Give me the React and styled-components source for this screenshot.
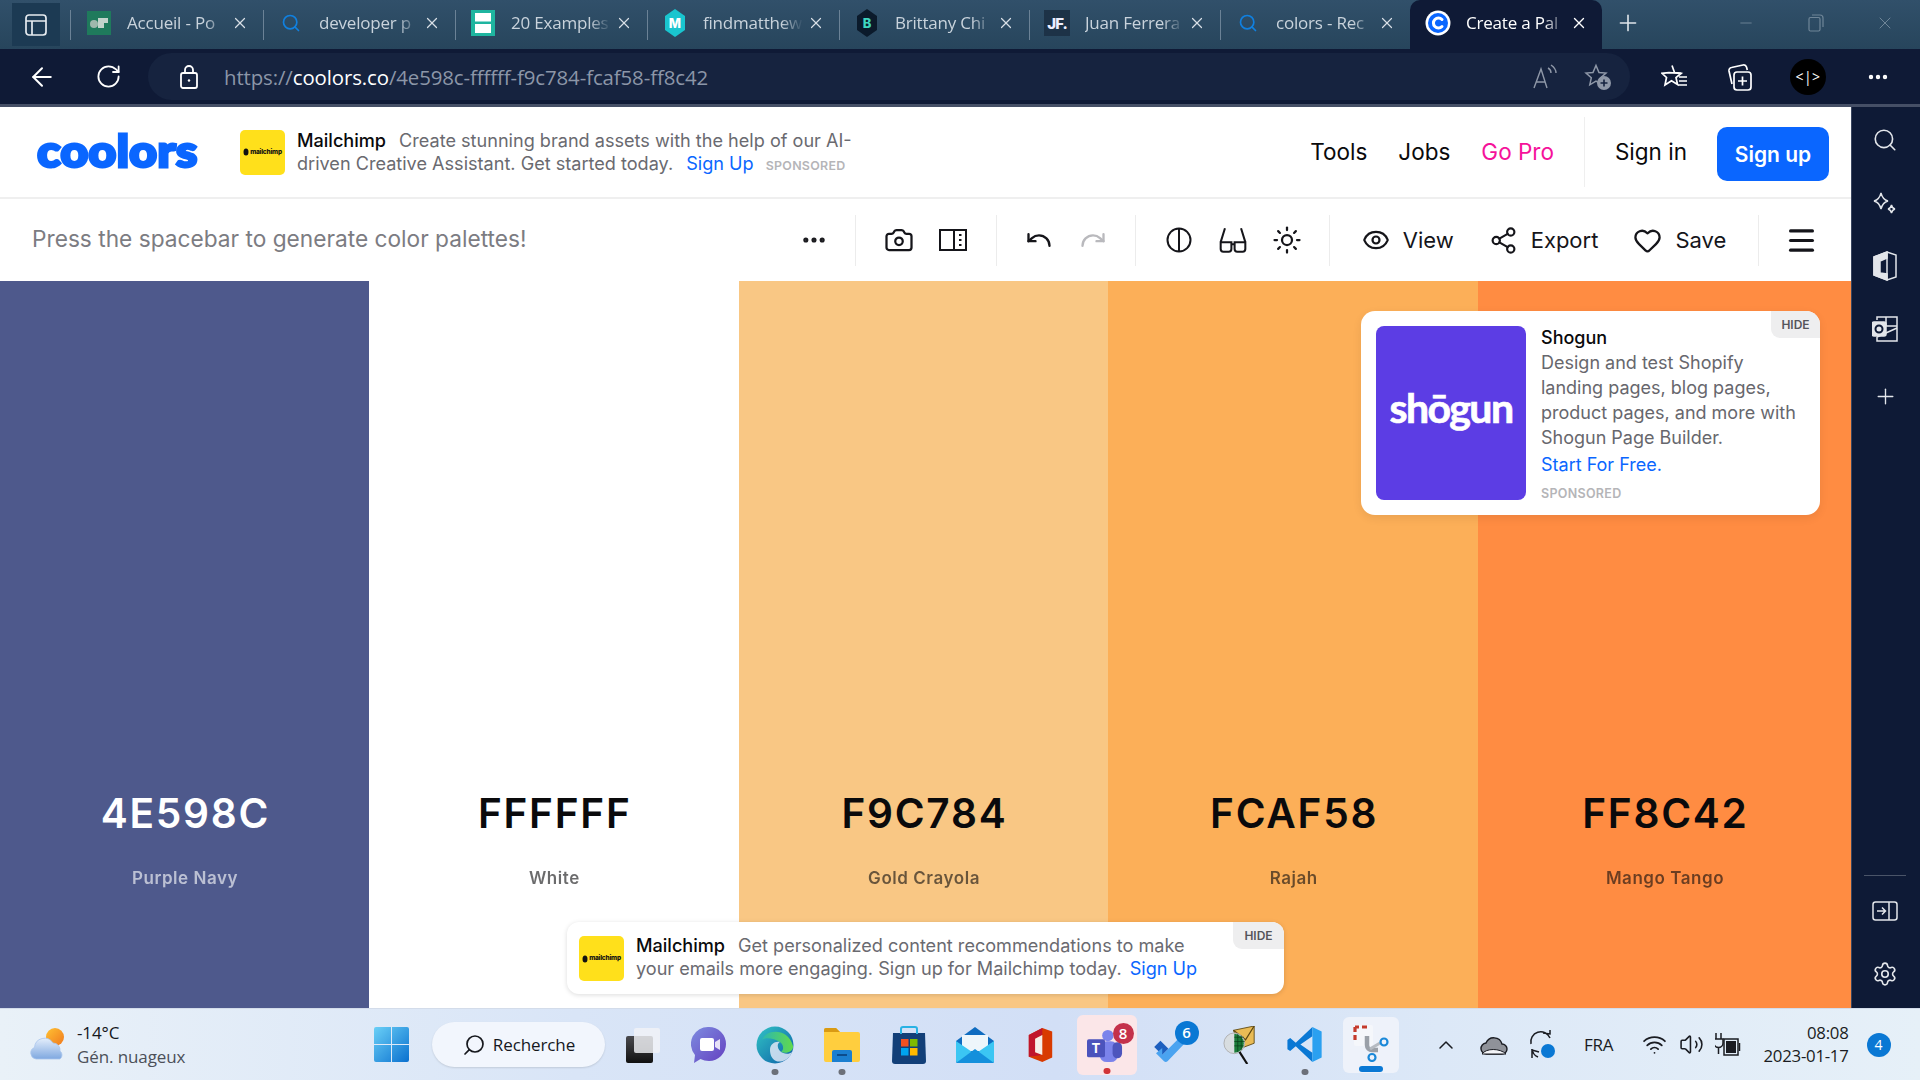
import React from "react";
import styled, { createGlobalStyle } from "styled-components";
import { ArrowLeft, RotateCw, Plus, Minus, X, Search, Ellipsis, Camera, Undo, Redo, Sun, Eye, Share2, Heart, Menu, ChevronUp, Wifi, Volume2, Settings } from "lucide-react";

const Global = createGlobalStyle`
  html, body { margin: 0; padding: 0; width: 1920px; height: 1080px; overflow: hidden; background: #fff; }
  * { box-sizing: border-box; }
  svg { display: block; flex: none; }
`;

const SYS = `"Open Sans", "Noto Sans", sans-serif`;
const UI = `Inter, "Liberation Sans", sans-serif`;

const Screen = styled.div`
  width: 1920px; height: 1080px; display: flex; flex-direction: column; overflow: hidden; font-family: ${UI};
`;
const TabStrip = styled.div`
  height: 49px; display: flex; align-items: stretch; flex: none;
  background: linear-gradient(180deg, #31506a 0%, #27455c 100%);
`;
const WindowToggle = styled.div`
  width: 48px; height: 43px; margin: 3px 10px 3px 12px; background: #1c3a53; display: flex; align-items: center; justify-content: center; color: #e6ebf0;
`;
const Tab = styled.div`
  width: ${p => p.$w || 192}px; height: 49px; display: flex; align-items: center; padding: 0 14px 3px 16px; position: relative; flex: none;
  border-radius: ${p => (p.$active ? "10px 10px 0 0" : "0")};
  background: ${p => (p.$active ? "#0f1a36" : "transparent")};
  &::before {
    content: ""; display: ${p => (p.$active || p.$first ? "none" : "block")}; position: absolute; left: 0; top: 10px; bottom: 9px; width: 1px; background: #6b8296;
  }
`;
const FirstSep = styled.div`
  width: 1px; height: 30px; background: #6b8296; margin: 10px 0 0 0; flex: none;
`;
const TabIcon = styled.div`
  width: 24px; height: 24px; flex: none; margin-right: 16px; display: flex; align-items: center; justify-content: center;
`;
const TabTitle = styled.div`
  flex: 1; min-width: 0; white-space: nowrap; font: 400 17px/24px ${SYS}; letter-spacing: -.2px;
  color: ${p => (p.$active ? "#ffffff" : "#c9d3dc")};
  -webkit-mask-image: linear-gradient(to right, #000 78%, transparent 100%);
  mask-image: linear-gradient(to right, #000 78%, transparent 100%);
`;
const TabClose = styled.div`
  width: 18px; margin-left: 4px; flex: none; color: ${p => (p.$active ? "#fff" : "#d8dfe6")}; display: flex; justify-content: center;
`;
const NewTab = styled.div`
  width: 52px; display: flex; align-items: center; justify-content: center; color: #dfe5ea; padding-bottom: 3px;
`;
const WindowControls = styled.div`
  margin-left: auto; display: flex; align-items: center; padding-bottom: 3px; color: #6f8698;
`;
const WindowButton = styled.div`
  width: 69.5px; display: flex; justify-content: center;
`;
const BrowserBar = styled.div`
  height: 55px; flex: none; background: #0f1a36; display: flex; align-items: center; color: #fff;
`;
const NavButton = styled.div`
  width: ${p => p.$w}px; margin-left: ${p => p.$ml || 0}px; display: flex; justify-content: center; flex: none;
`;
const AddressPill = styled.div`
  width: 1482px; height: 47px; margin: 0 0 0 23px; border-radius: 24px; background: #16233f; display: flex; align-items: center; padding-left: 31px; flex: none;
`;
const Url = styled.div`
  margin-left: 25px; font: 400 20.4px/24px ${SYS}; letter-spacing: -.1px; color: #8c96a8; white-space: nowrap;
  b { font-weight: 400; color: #fff; }
`;
const PillTools = styled.div`
  margin-left: auto; display: flex; align-items: center; gap: 26px; padding-right: 18px; color: #8f98a8;
`;
const Avatar = styled.div`
  width: 36px; height: 36px; border-radius: 50%; background: #000; display: flex; align-items: center; justify-content: center; color: #fff; font: 400 14px/1 ${SYS}; letter-spacing: .5px;
`;
const TopLine = styled.div`
  height: 3px; flex: none; background: #454f66;
`;
const Middle = styled.div`
  flex: 1; display: flex; min-height: 0;
`;
const Main = styled.div`
  flex: 1; min-width: 0; display: flex; flex-direction: column; background: #fff;
`;
const Sidebar = styled.div`
  width: 69px; flex: none; background: #0e1a36; border-left: 1px solid #3a4660; display: flex; flex-direction: column; align-items: center; padding: 20px 2px 0 0; color: #e3e6eb;
`;
const SideSlot = styled.div`
  height: ${p => p.$h}px; margin-top: ${p => p.$mt || 0}px; display: flex; align-items: center; justify-content: center;
`;
const SideBottom = styled.div`
  margin-top: auto; display: flex; flex-direction: column; align-items: center; width: 100%;
`;
const SideRule = styled.div`
  width: 42px; height: 1px; background: #4a5468;
`;
const SiteHeader = styled.div`
  height: 92px; flex: none; display: flex; align-items: center; padding: 0 22px 0 35px; border-bottom: 2px solid #efefef;
`;
const LogoMark = styled.div`
  width: 170px; flex: none; white-space: nowrap; color: #0a66ff; font: 900 44px/56px Lato, sans-serif; letter-spacing: .4px; -webkit-text-stroke: 3px #0a66ff; transform: scaleX(1.09); transform-origin: left center; padding: 0 0 4px 2px;
`;
const HeaderAd = styled.div`
  display: flex; align-items: center; margin-left: 35px; width: 620px;
`;
const BrandTile = styled.div`
  width: 45px; height: 45px; flex: none; border-radius: 5px; background: #ffe01b; display: flex; align-items: center; justify-content: center; gap: 1px; color: #111;
  span { font: 800 6.5px/1 ${UI}; letter-spacing: -.2px; }
`;
const AdText = styled.div`
  margin: ${p => p.$mt || 0}px 0 0 12px; font: 400 18.1px/23px ${UI}; color: #6a6a70; white-space: nowrap;
  strong { font-weight: 500; color: #0a0a0c; margin-right: 13px; }
`;
const AdLink = styled.span`
  color: #0a66ff; margin-left: ${p => p.$ml}px;
`;
const AdTag = styled.span`
  margin-left: 12px; font: 600 12.4px/1 ${UI}; letter-spacing: .3px; color: #b5b5b8;
`;
const HeaderNav = styled.nav`
  margin-left: auto; display: flex; align-items: center; height: 70px; font: 400 22.5px/1 ${UI}; color: #0a0a0c;
`;
const NavLink = styled.span`
  margin-left: ${p => p.$ml || 0}px; color: ${p => p.$color || "inherit"}; white-space: nowrap;
`;
const NavRule = styled.div`
  width: 1px; height: 70px; background: #efefef; margin: 0 30px;
`;
const SignUp = styled.div`
  width: 112px; height: 54px; margin: 4px 0 0 30px; border-radius: 10px; background: #0a66ff; color: #fff; display: flex; align-items: center; justify-content: center; font: 600 21px/1 ${UI};
`;
const ToolBar = styled.div`
  height: 82px; flex: none; display: flex; align-items: center;
`;
const Hint = styled.div`
  flex: 1; padding: 0 0 2px 32px; font: 400 22.7px/1 ${UI}; color: #7c7c82; white-space: nowrap;
`;
const Dots = styled.div`
  width: 54px; margin-right: 14px; display: flex; justify-content: center; color: #1b1b1f;
`;
const ToolGroup = styled.div`
  width: ${p => p.$w}px; height: 51px; flex: none; border-left: 1px solid #ececec; display: flex; align-items: center; justify-content: center; gap: ${p => p.$gap || 0}px; padding-right: ${p => p.$pr || 0}px;
`;
const ToolIcon = styled.div`
  width: 54px; display: flex; justify-content: center; color: ${p => p.$muted ? "#b9b9bd" : "#15151a"};
`;
const ToolButton = styled.div`
  display: flex; align-items: center; gap: 13px; font: 400 22px/1 ${UI}; color: #15151a;
`;
const Palette = styled.div`
  flex: 1; display: flex; position: relative; min-height: 0;
`;
const Swatch = styled.div`
  flex: none; width: 369.7px; background: ${p => p.$bg}; color: ${p => p.$fg}; display: flex; flex-direction: column; align-items: center; justify-content: flex-end; padding-bottom: 119px;
  &:nth-child(1) { width: 369px; }
  &:nth-child(5) { flex: 1; }
`;
const Hex = styled.div`
  font: 600 40.6px/48px ${UI}; letter-spacing: 1.75px; padding-left: 1.75px;
`;
const ColorName = styled.div`
  margin-top: 29px; padding-left: 1px; font: 600 17px/22px ${UI}; letter-spacing: .55px; opacity: ${p => p.$o};
`;
const AdCard = styled.div`
  position: absolute; right: 31px; top: 30px; width: 459px; height: 204px; background: #fff; border-radius: 14px; padding: 15px; display: flex; overflow: hidden; box-shadow: 0 3px 10px rgba(0,0,0,.08);
`;
const ShogunTile = styled.div`
  width: 150px; height: 174px; flex: none; border-radius: 8px; background: #5c3de4; display: flex; align-items: center; justify-content: center; padding-bottom: 12px; color: #fff; font: 700 41px/1 Lato, sans-serif; letter-spacing: -1.6px; -webkit-text-stroke: .7px #fff;
`;
const AdBody = styled.div`
  margin-left: 15px; display: flex; flex-direction: column; font: 400 18px/25.3px ${UI}; color: #67676d;
`;
const AdTitle = styled.div`
  font-weight: 500; color: #0a0a0c; line-height: 23.5px;
`;
const AdBlueLine = styled.div`
  color: #0a66ff; margin-top: 1px;
`;
const AdTagBlock = styled.div`
  margin-top: 9.5px; font: 600 12.5px/16px ${UI}; letter-spacing: .3px; color: #b5b5b8;
`;
const Hide = styled.div`
  position: absolute; top: 0; right: 0; width: ${p => p.$w}px; height: 27px; background: #eeeeef; border-bottom-left-radius: 9px; color: #55555b; display: flex; align-items: center; justify-content: center; font: 600 12px/1 ${UI};
`;
const BottomAd = styled.div`
  position: absolute; left: 567px; top: 641px; width: 717px; height: 72px; background: #fff; border-radius: 12px; padding: 14px 12px; display: flex; overflow: hidden; box-shadow: 0 1px 5px rgba(0,0,0,.14);
`;
const Taskbar = styled.div`
  height: 72px; flex: none; display: flex; align-items: center; position: relative; font-family: ${SYS}; color: #16181d;
  background: linear-gradient(90deg, #e9f1f8 0%, #d9e5f7 30%, #d2dff6 55%, #dce8f7 75%, #e6f0f8 100%);
  border-top: 1px solid #d3dcea;
`;
const Weather = styled.div`
  width: 374px; flex: none; padding-left: 29px; display: flex; align-items: center; gap: 10px;
`;
const WeatherText = styled.div`
  font: 400 17px/24px ${SYS}; letter-spacing: -.1px;
  div + div { color: #4c5058; }
`;
const SearchPill = styled.div`
  width: 173px; height: 45px; margin: 0 0 0 23px; border-radius: 23px; background: #f2f6fd; box-shadow: 0 1px 2px rgba(0,0,0,.12); display: flex; align-items: center; justify-content: center; gap: 7px; font: 400 17px/1 ${SYS}; letter-spacing: -.1px; color: #16181d; flex: none;
`;
const MirroredSearch = styled(Search)`
  transform: scaleX(-1);
`;
const Apps = styled.div`
  display: flex; margin-left: 4px; flex: none; align-items: center;
`;
const AppSlot = styled.div`
  width: ${p => p.$w || 66.6}px; height: ${p => p.$h || 60}px; margin-left: ${p => p.$ml || 0}px; padding: ${p => p.$pad || 0}; position: relative; display: flex; align-items: center; justify-content: center; border-radius: 6px; background: ${p => p.$bg || "transparent"};
`;
const RunDot = styled.div`
  position: absolute; bottom: ${p => p.$b ?? 0}px; left: 50%; transform: translateX(-50%); width: ${p => p.$w || 7}px; height: 6px; border-radius: 3px; background: ${p => p.$c || "#6c7079"};
`;
const Badge = styled.div`
  position: absolute; top: ${p => p.$t}px; right: ${p => p.$r}px; width: ${p => p.$s}px; height: ${p => p.$s}px; border-radius: 50%; background: ${p => p.$c}; color: #fff; display: flex; align-items: center; justify-content: center; font: 600 15px/1 ${SYS};
`;
const Tray = styled.div`
  display: flex; align-items: center; flex: none; margin-left: 23px; color: #1a1c22;
`;
const TraySlot = styled.div`
  width: ${p => p.$w}px; display: flex; justify-content: center; font: 400 17px/1 ${SYS}; letter-spacing: -.3px;
`;
const Clock = styled.div`
  width: 100px; padding: 0 1px 2px 0; text-align: right; font: 400 16.8px/23px ${SYS}; letter-spacing: -.25px;
`;
const NotifyDot = styled.div`
  width: 24px; height: 24px; border-radius: 50%; margin-left: 17px; background: #0a78d4; color: #fff; display: flex; align-items: center; justify-content: center; font: 400 14px/1 ${SYS};
`;

const Glasses = () => (
  <svg width="30" height="30" viewBox="0 0 28 28" fill="none" stroke="currentColor" strokeWidth="1.900">
    <path d="M2.500 16 L6.500 3 M25.500 16 L21.500 3 M2.500 16h10v6.500a2.500 2.500 0 0 1-2.500 2.500H5a2.500 2.500 0 0 1-2.500-2.500zM15.500 16h10v6.500a2.500 2.500 0 0 1-2.500 2.500h-5a2.500 2.500 0 0 1-2.500-2.500zM12.500 18h3" />
  </svg>
);
const ContrastIcon = () => (
  <svg width="26" height="28" viewBox="0 0 26 28" fill="none" stroke="currentColor" strokeWidth="2">
    <circle cx="13" cy="14" r="11.500" /><path d="M13 2.500v23" />
  </svg>
);
const SidePanelIcon = () => (
  <svg width="28" height="26" viewBox="0 0 28 26" fill="none" stroke="currentColor" strokeWidth="2">
    <rect x="1" y="3" width="26" height="20" /><path d="M15 3v20M20 8h2.500M20 13h2.500M20 18h2.500" />
  </svg>
);
const ReadAloud = () => (
  <svg width="26" height="26" viewBox="0 0 26 26" fill="none" stroke="currentColor" strokeWidth="1.400">
    <path d="M2 24 L9 5 L15 24 M4.500 18h8.500M16 4c2 1 3 3 3 5M19 1c3 2 5 5 5 8" />
  </svg>
);
const FavAdd = () => (
  <svg width="28" height="28" viewBox="0 0 28 28" fill="none" stroke="currentColor" strokeWidth="1.500">
    <path d="M12 2.500l3 7 7 .6-5.300 4.700 1.500 7-6.200-3.600-6.200 3.600 1.500-7L2 10.100l7-.6z" />
    <circle cx="20" cy="20" r="7" fill="#8f98a8" stroke="none" /><path d="M20 16.500v7M16.500 20h7" stroke="#16233f" strokeWidth="1.600" />
  </svg>
);
const FavList = () => (
  <svg width="28" height="28" viewBox="0 0 28 28" fill="none" stroke="currentColor" strokeWidth="1.700">
    <path d="M11 2.500l2.500 7 7 .5M20 10.500l-5 4 1.500 7-6-3.800L4 22l1.500-7.500L1 10.300l7-.6z" /><path d="M18 14h8M18 18h8M17 22h9" />
  </svg>
);
const Collections = () => (
  <svg width="28" height="30" viewBox="0 0 28 30" fill="none" stroke="currentColor" strokeWidth="1.700">
    <path d="M7 22l-3-13a3 3 0 0 1 2.500-3.500L18 3a3 3 0 0 1 3.500 2l.8 3" /><rect x="9" y="10" width="17" height="18" rx="3" /><path d="M17.500 14.500v9M13 19h9" />
  </svg>
);
const LockIcon = () => (
  <svg width="20" height="26" viewBox="0 0 20 26" fill="none" stroke="#fff" strokeWidth="1.800">
    <rect x="2" y="9" width="16" height="15" rx="2" /><path d="M6 9V6a4 4 0 0 1 8 0v3" /><circle cx="10" cy="16.500" r="1.200" fill="#fff" stroke="none" />
  </svg>
);
const WindowToggleIcon = () => (
  <svg width="22" height="24" viewBox="0 0 22 24" fill="none" stroke="currentColor" strokeWidth="1.700">
    <rect x="1" y="2" width="20" height="20" rx="3" /><path d="M1 8h20M7 8v14" />
  </svg>
);
const RestoreIcon = () => (
  <svg width="16" height="18" viewBox="0 0 16 18" fill="none" stroke="currentColor" strokeWidth="1.200">
    <rect x="1" y="3.500" width="11" height="13.500" rx="1.500" /><path d="M4 1h8a3 3 0 0 1 3 3v9" />
  </svg>
);
const AccueilFav = () => (
  <svg width="24" height="24" viewBox="0 0 24 24">
    <rect width="24" height="24" fill="#1f7a5c" /><circle cx="7" cy="13" r="4" fill="#9fb8ad" /><path d="M11 7h10v5h-4v5h-6z" fill="#c2d3cb" />
  </svg>
);
const TealFav = () => (
  <svg width="24" height="26" viewBox="0 0 24 26">
    <rect width="24" height="26" fill="#1fb5a0" /><rect x="4" y="3" width="16" height="8.500" fill="#fff" /><rect x="4" y="14" width="16" height="9" fill="#fff" />
  </svg>
);
const HexFav = ({ c, fg, l }) => (
  <svg width="24" height="28" viewBox="0 0 24 28">
    <path d="M12 0l10 7v14l-10 7-10-7V7z" fill={c} />
    <text x="12" y="19" textAnchor="middle" fill={fg} fontFamily="Inter" fontSize="13" fontWeight="800">{l}</text>
  </svg>
);
const JfFav = () => (
  <svg width="26" height="26" viewBox="0 0 26 26">
    <rect width="26" height="26" fill="#1d3247" />
    <text x="13" y="19" textAnchor="middle" fill="#eef" fontFamily="Inter" fontSize="15" fontWeight="800" letterSpacing="-1">JF.</text>
  </svg>
);
const CoolorsFav = () => (
  <svg width="26" height="26" viewBox="0 0 26 26" fill="none">
    <circle cx="13" cy="13" r="12.500" fill="#fff" /><circle cx="13" cy="13" r="10" fill="#0a66ff" />
    <path d="M17 9.500a5 5 0 1 0 0 7" stroke="#fff" strokeWidth="3" strokeLinecap="round" />
  </svg>
);
const WeatherIcon = () => (
  <svg width="38" height="36" viewBox="0 0 38 36">
    <defs>
      <linearGradient id="wc" x1="0" y1="0" x2="0" y2="1"><stop offset="0" stopColor="#e4eefb" /><stop offset="1" stopColor="#7fa8e0" /></linearGradient>
      <linearGradient id="ws" x1="0" y1="0" x2="1" y2="1"><stop offset="0" stopColor="#ffc233" /><stop offset="1" stopColor="#f0781e" /></linearGradient>
    </defs>
    <circle cx="26" cy="10" r="9" fill="url(#ws)" />
    <path d="M7 32a6 6 0 0 1-1.500-11.500A10 10 0 0 1 24 16a7 7 0 0 1 7 8 5 5 0 0 1 0 8z" fill="url(#wc)" stroke="#a9c5ec" strokeWidth=".8" />
  </svg>
);
const WinLogo = () => (
  <svg width="35" height="35" viewBox="0 0 35 35">
    <defs><linearGradient id="wl" x1="0" y1="0" x2="1" y2="1"><stop offset="0" stopColor="#6ad0f7" /><stop offset="1" stopColor="#0a70cf" /></linearGradient></defs>
    <path d="M0 2a2 2 0 0 1 2-2h15v17H0zM18 0h15a2 2 0 0 1 2 2v15H18zM0 18h17v17H2a2 2 0 0 1-2-2zM18 18h17v15a2 2 0 0 1-2 2H18z" fill="url(#wl)" />
  </svg>
);
const TaskView = () => (
  <svg width="36" height="36" viewBox="0 0 36 36">
    <defs><linearGradient id="tv" x1="0" y1="0" x2="0" y2="1"><stop offset="0" stopColor="#4a4a4e" /><stop offset="1" stopColor="#111" /></linearGradient></defs>
    <rect x="2" y="9" width="27" height="27" rx="2" fill="url(#tv)" /><rect x="10" y="1" width="26" height="25" rx="2" fill="#f2f3f6" fillOpacity=".82" />
  </svg>
);
const ChatIcon = () => (
  <svg width="36" height="38" viewBox="0 0 36 38">
    <defs><linearGradient id="ch" x1="0" y1="0" x2="1" y2="1"><stop offset="0" stopColor="#7d8ce0" /><stop offset="1" stopColor="#6440c0" /></linearGradient></defs>
    <path d="M18 1a17 17 0 0 1 0 34c-3 0-6-.8-8.500-2L3 37l1-8A17 17 0 0 1 18 1z" fill="url(#ch)" /><rect x="9" y="12" width="14" height="13" rx="2" fill="#fff" /><path d="M24 16l5-3v11l-5-3z" fill="#e7e2f7" />
  </svg>
);
const EdgeIcon = () => (
  <svg width="38" height="38" viewBox="0 0 38 38">
    <defs>
      <linearGradient id="e1" x1="0" y1="0" x2="1" y2="1"><stop offset="0" stopColor="#31c4c4" /><stop offset="1" stopColor="#0c5ea8" /></linearGradient>
      <linearGradient id="e2" x1="0" y1="0" x2="1" y2="0"><stop offset="0" stopColor="#2cb7b0" /><stop offset="1" stopColor="#62d94c" /></linearGradient>
    </defs>
    <circle cx="19" cy="19" r="18.500" fill="url(#e1)" />
    <path d="M6 14C9 3 32 1 37 20c.6 6-7 8-12 6 3-2 3-7-1-10-6-4-15-5-18-2z" fill="url(#e2)" />
    <path d="M14 24c0-6 5-9 10-8-3 1-3 6 0 9s9 4 12 1c-3 8-11 11-16 9-4-2-6-6-6-11z" fill="#dfe8f6" opacity=".85" />
  </svg>
);
const FolderIcon = () => (
  <svg width="36" height="36" viewBox="0 0 36 36">
    <path d="M0 3a2 2 0 0 1 2-2h10l4 4h18a2 2 0 0 1 2 2v26a2 2 0 0 1-2 2H2a2 2 0 0 1-2-2z" fill="#ffce3e" /><path d="M0 3a2 2 0 0 1 2-2h10l4 4H0z" fill="#d99a13" />
    <path d="M8 25a2 2 0 0 1 2-2h16a2 2 0 0 1 2 2v10H8z" fill="#1b7fd0" /><rect x="13" y="27" width="10" height="2" fill="#0c4c8c" />
  </svg>
);
const StoreIcon = () => (
  <svg width="36" height="38" viewBox="0 0 36 38">
    <path d="M2 7h32l1 28a3 3 0 0 1-3 3H4a3 3 0 0 1-3-3z" fill="#123f78" /><path d="M10 8V3a2 2 0 0 1 2-2h12a2 2 0 0 1 2 2v5" fill="none" stroke="#29b2e4" strokeWidth="2" />
    <rect x="10" y="13" width="7.500" height="7.500" fill="#f25022" /><rect x="19" y="13" width="7.500" height="7.500" fill="#7fba00" /><rect x="10" y="22" width="7.500" height="7.500" fill="#00a4ef" /><rect x="19" y="22" width="7.500" height="7.500" fill="#ffb900" />
  </svg>
);
const MailIcon = () => (
  <svg width="38" height="36" viewBox="0 0 38 36">
    <path d="M0 14L19 0l19 14v20a2 2 0 0 1-2 2H2a2 2 0 0 1-2-2z" fill="#0f6cc0" /><path d="M6 8h26v16H6z" fill="#eef6fb" /><path d="M0 14l19 13 19-13v20a2 2 0 0 1-2 2H2a2 2 0 0 1-2-2z" fill="#3bc6f3" /><path d="M0 36L19 22l19 14z" fill="#1490dc" />
  </svg>
);
const OfficeIcon = () => (
  <svg width="27" height="36" viewBox="0 0 30 38">
    <path d="M2 8L17 0l11 4v29L17 38 2 32z" fill="#d83b01" /><path d="M2 8L17 0v8l-8 4v15l8 3-15 2z" fill="#c0162c" /><path d="M9 12l8-4v22l-8-3z" fill="#f5efe9" />
  </svg>
);
const TeamsIcon = () => (
  <svg width="36" height="36" viewBox="0 0 38 38">
    <circle cx="22" cy="8" r="6" fill="#7b83eb" /><rect x="13" y="14" width="20" height="22" rx="8" fill="#7b83eb" /><rect x="27" y="15" width="10" height="17" rx="5" fill="#4d55bd" />
    <rect x="0" y="12" width="19" height="19" rx="2" fill="#4b53bc" /><text x="9.500" y="26.500" textAnchor="middle" fill="#fff" fontFamily="Inter" fontSize="14" fontWeight="700">T</text>
  </svg>
);
const TodoIcon = () => (
  <svg width="36" height="32" viewBox="0 0 40 36">
    <path d="M0 18l7-7 9 9-7 7z" fill="#1d5fbf" /><path d="M9 27L34 2l6 6-25 26a3 3 0 0 1-4 0l-9-9 7-6z" fill="#4aa3f0" />
  </svg>
);
const MagnifierIcon = () => (
  <svg width="33" height="38" viewBox="0 0 38 44">
    <path d="M12 5l24-5v20L20 26z" fill="#e9bb55" stroke="#5a4510" strokeWidth="1" /><path d="M12 5l14 11 10-16" fill="none" stroke="#5a4510" strokeWidth="1.400" />
    <circle cx="13" cy="20" r="12" fill="#d8dde0" stroke="#aaa" /><path d="M13 9a11 11 0 0 1 0 22z" fill="#1c7d3a" /><path d="M13 13h11M13 18h12M13 23h11M17 9v21M21 11v17" stroke="#0a3b18" strokeWidth=".8" /><path d="M19 30l9 14" stroke="#111" strokeWidth="2.500" />
  </svg>
);
const VsCode = () => (
  <svg width="36" height="37" viewBox="0 0 38 40">
    <path d="M27 1L9 18 3 13l-3 2v10l3 2 6-5 18 17V29L14 20l13-9z" fill="#0a78d4" /><path d="M27 1l10 5v28l-10 5z" fill="#2aa0f0" />
  </svg>
);
const SnipIcon = () => (
  <svg width="36" height="38" viewBox="0 0 36 38" fill="none">
    <rect x="1" y="1" width="19" height="21" rx="2" fill="#f5f7fb" /><path d="M2 3h4M9 3h5M2 3v5M2 11v5" stroke="#c43a2c" strokeWidth="3.200" />
    <path d="M14 12v9a5 5 0 0 0 5 5h6" stroke="#9aa0a8" strokeWidth="4.500" /><path d="M17 25l10-6" stroke="#b6bbc2" strokeWidth="3" />
    <circle cx="31" cy="18" r="3.500" stroke="#1a88d8" strokeWidth="2.200" /><circle cx="19" cy="33.500" r="3.500" stroke="#1a88d8" strokeWidth="2.200" />
  </svg>
);
const CloudTray = () => (
  <svg width="28" height="24" viewBox="0 0 28 24">
    <path d="M7 21a5.500 5.500 0 0 1-1-11 8.500 8.500 0 0 1 16 1 5 5 0 0 1 0 10z" fill="#8f9299" stroke="#1a1c22" strokeWidth="1.400" /><path d="M2 21c4-6 18-6 24 0z" fill="#f3f4f7" stroke="#1a1c22" strokeWidth="1" />
  </svg>
);
const SyncTray = () => (
  <svg width="28" height="30" viewBox="0 0 28 30" fill="none" stroke="#1a1c22" strokeWidth="1.500">
    <path d="M22 8A10 10 0 0 0 3 14M15 3l7 1v-4M4 19a10 10 0 0 0 6 8M4 28v-8l7 2" /><circle cx="20" cy="21" r="7" fill="#0a78d4" stroke="none" />
  </svg>
);
const BatteryTray = () => (
  <svg width="26" height="28" viewBox="0 0 26 28" fill="none" stroke="#1a1c22" strokeWidth="1.500">
    <path d="M1 2v6M6 2v6M-1 8h9v4a4 4 0 0 1-9 0zM3.500 16v7" /><rect x="9" y="8" width="14" height="16" /><rect x="11" y="10" width="10" height="12" fill="#1a1c22" stroke="none" /><path d="M24.500 12v8" />
  </svg>
);
const OfficeSide = () => (
  <svg width="26" height="30" viewBox="0 0 26 30" fill="none" stroke="#e3e6eb" strokeWidth="1.500">
    <path d="M2 6l13-5 9 3v22l-9 3L2 24z" /><path d="M2 6l13-5v6L8 10v12l7 1v6L2 24z" fill="#e3e6eb" /><path d="M15 1v28" />
  </svg>
);
const OutlookSide = () => (
  <svg width="26" height="26" viewBox="0 0 26 26" fill="none" stroke="#e3e6eb" strokeWidth="1.500">
    <path d="M5 4V1h20v24H5v-4M14 1v9M25 10H14M5 21l20-9" /><rect x="0" y="6" width="14" height="14" rx="2" fill="#e3e6eb" /><circle cx="7" cy="13" r="3.500" stroke="#0e1a36" strokeWidth="2" />
  </svg>
);
const SparkSide = () => (
  <svg width="24" height="24" viewBox="0 0 24 24" fill="none" stroke="currentColor" strokeWidth="1.400">
    <path d="M8 1c1 4 3 7 7 8-4 1-6 4-7 8-1-4-3-7-7-8 4-1 6-4 7-8zM18.500 13c.4 2 1.500 3.500 3.500 4-2 .5-3 2-3.500 4-.5-2-1.500-3.500-3.500-4 2-.5 3-2 3.500-4z" />
  </svg>
);
const ExpandSide = () => (
  <svg width="26" height="20" viewBox="0 0 26 20" fill="none" stroke="currentColor" strokeWidth="1.500">
    <rect x="1" y="1" width="24" height="18" rx="2.500" /><path d="M17 1v18M5 10h8M10 6.500l3.500 3.500-3.500 3.500" />
  </svg>
);

const swatches = [
  { bg: "#4e598c", fg: "#fff", hex: "4E598C", name: "Purple Navy", o: .62 },
  { bg: "#ffffff", fg: "#0a0a0c", hex: "FFFFFF", name: "White", o: .6 },
  { bg: "#f9c784", fg: "#0a0a0c", hex: "F9C784", name: "Gold Crayola", o: .6 },
  { bg: "#fcaf58", fg: "#0a0a0c", hex: "FCAF58", name: "Rajah", o: .6 },
  { bg: "#ff8c42", fg: "#0a0a0c", hex: "FF8C42", name: "Mango Tango", o: .6 },
];
const lens = <Search size={20} color="#1080e0" strokeWidth={2} />;
const tabs = [
  { icon: <AccueilFav />, title: "Accueil - Po", first: true, w: 192 },
  { icon: lens, title: "developer p", w: 192 },
  { icon: <TealFav />, title: "20 Examples", w: 192 },
  { icon: <HexFav c="#19c5cf" fg="#fff" l="M" />, title: "findmatthew", w: 192 },
  { icon: <HexFav c="#0b1a2b" fg="#3fd6c0" l="B" />, title: "Brittany Chi", w: 190 },
  { icon: <JfFav />, title: "Juan Ferrera", w: 191 },
  { icon: lens, title: "colors - Rec", w: 190 },
];

const MailTile = () => (
  <BrandTile>
    <svg width="6" height="8" viewBox="0 0 6 8"><ellipse cx="3" cy="4" rx="2.500" ry="3.500" fill="#111" /></svg>
    <span>mailchimp</span>
  </BrandTile>
);

export default function App() {
  return (
    <Screen>
      <Global />
      <TabStrip>
        <WindowToggle><WindowToggleIcon /></WindowToggle>
        <FirstSep />
        {tabs.map(t => (
          <Tab key={t.title} $first={t.first} $w={t.w}>
            <TabIcon>{t.icon}</TabIcon>
            <TabTitle>{t.title}</TabTitle>
            <TabClose><X size={18} strokeWidth={1.6} /></TabClose>
          </Tab>
        ))}
        <Tab $active>
          <TabIcon><CoolorsFav /></TabIcon>
          <TabTitle $active>Create a Pal</TabTitle>
          <TabClose $active><X size={18} strokeWidth={1.8} /></TabClose>
        </Tab>
        <NewTab><Plus size={26} strokeWidth={1.5} /></NewTab>
        <WindowControls>
          <WindowButton><Minus size={18} strokeWidth={1.2} /></WindowButton>
          <WindowButton><RestoreIcon /></WindowButton>
          <WindowButton><X size={20} strokeWidth={1.2} /></WindowButton>
        </WindowControls>
      </TabStrip>
      <BrowserBar>
        <NavButton $w={34} $ml={25}><ArrowLeft size={30} strokeWidth={1.6} /></NavButton>
        <NavButton $w={34} $ml={32}><RotateCw size={27} strokeWidth={1.6} /></NavButton>
        <AddressPill>
          <LockIcon />
          <Url>https://<b>coolors.co</b>/4e598c-ffffff-f9c784-fcaf58-ff8c42</Url>
          <PillTools><ReadAloud /><FavAdd /></PillTools>
        </AddressPill>
        <NavButton $w={28} $ml={30.5}><FavList /></NavButton>
        <NavButton $w={28} $ml={36.5}><Collections /></NavButton>
        <NavButton $w={36} $ml={37}><Avatar>&lt;|&gt;</Avatar></NavButton>
        <NavButton $w={28} $ml={37.5}><Ellipsis size={24} strokeWidth={2.4} /></NavButton>
      </BrowserBar>
      <TopLine />
      <Middle>
        <Main>
          <SiteHeader>
            <LogoMark>coolors</LogoMark>
            <HeaderAd>
              <MailTile />
              <AdText>
                <strong>Mailchimp</strong>Create stunning brand assets with the help of our AI-<br />
                driven Creative Assistant. Get started today. <AdLink $ml={8}>Sign Up</AdLink><AdTag>SPONSORED</AdTag>
              </AdText>
            </HeaderAd>
            <HeaderNav>
              <NavLink>Tools</NavLink>
              <NavLink $ml={31}>Jobs</NavLink>
              <NavLink $ml={31} $color="#f5129a">Go Pro</NavLink>
              <NavRule />
              <NavLink>Sign in</NavLink>
              <SignUp>Sign up</SignUp>
            </HeaderNav>
          </SiteHeader>
          <ToolBar>
            <Hint>Press the spacebar to generate color palettes!</Hint>
            <Dots><Ellipsis size={28} strokeWidth={2.4} /></Dots>
            <ToolGroup $w={141}>
              <ToolIcon><Camera size={30} strokeWidth={1.8} /></ToolIcon>
              <ToolIcon><SidePanelIcon /></ToolIcon>
            </ToolGroup>
            <ToolGroup $w={139}>
              <ToolIcon><Undo size={28} strokeWidth={2} /></ToolIcon>
              <ToolIcon $muted><Redo size={28} strokeWidth={2} /></ToolIcon>
            </ToolGroup>
            <ToolGroup $w={194}>
              <ToolIcon><ContrastIcon /></ToolIcon>
              <ToolIcon><Glasses /></ToolIcon>
              <ToolIcon><Sun size={30} strokeWidth={1.8} /></ToolIcon>
            </ToolGroup>
            <ToolGroup $w={429} $gap={35}>
              <ToolButton><Eye size={28} strokeWidth={1.9} />View</ToolButton>
              <ToolButton><Share2 size={29} strokeWidth={1.8} />Export</ToolButton>
              <ToolButton><Heart size={29} strokeWidth={1.9} />Save</ToolButton>
            </ToolGroup>
            <ToolGroup $w={93} $pr={7}><Menu size={33} strokeWidth={2.2} color="#15151a" /></ToolGroup>
          </ToolBar>
          <Palette>
            {swatches.map(s => (
              <Swatch key={s.hex} $bg={s.bg} $fg={s.fg}>
                <Hex>{s.hex}</Hex>
                <ColorName $o={s.o}>{s.name}</ColorName>
              </Swatch>
            ))}
            <AdCard>
              <ShogunTile>shōgun</ShogunTile>
              <AdBody>
                <AdTitle>Shogun</AdTitle>
                <div>Design and test Shopify<br />landing pages, blog pages,<br />product pages, and more with<br />Shogun Page Builder.</div>
                <AdBlueLine>Start For Free.</AdBlueLine>
                <AdTagBlock>SPONSORED</AdTagBlock>
              </AdBody>
              <Hide $w={49}>HIDE</Hide>
            </AdCard>
            <BottomAd>
              <MailTile />
              <AdText $mt={-2}>
                <strong>Mailchimp</strong>Get personalized content recommendations to make<br />
                your emails more engaging. Sign up for Mailchimp today. <AdLink $ml={3}>Sign Up</AdLink>
              </AdText>
              <Hide $w={51}>HIDE</Hide>
            </BottomAd>
          </Palette>
        </Main>
        <Sidebar>
          <SideSlot $h={26}><Search size={26} strokeWidth={1.5} /></SideSlot>
          <SideSlot $h={36} $mt={33}><SparkSide /></SideSlot>
          <SideSlot $h={36} $mt={26}><OfficeSide /></SideSlot>
          <SideSlot $h={36} $mt={27}><OutlookSide /></SideSlot>
          <SideSlot $h={36} $mt={31}><Plus size={25} strokeWidth={1.3} /></SideSlot>
          <SideBottom>
            <SideRule />
            <SideSlot $h={70}><ExpandSide /></SideSlot>
            <SideSlot $h={56}><Settings size={26} strokeWidth={1.5} /></SideSlot>
            <SideSlot $h={6} />
          </SideBottom>
        </Sidebar>
      </Middle>
      <Taskbar>
        <Weather>
          <WeatherIcon />
          <WeatherText><div>-14°C</div><div>Gén. nuageux</div></WeatherText>
        </Weather>
        <WinLogo />
        <SearchPill><MirroredSearch size={24} strokeWidth={1.7} />Recherche</SearchPill>
        <Apps>
          <AppSlot><TaskView /></AppSlot>
          <AppSlot><ChatIcon /></AppSlot>
          <AppSlot><EdgeIcon /><RunDot /></AppSlot>
          <AppSlot><FolderIcon /><RunDot /></AppSlot>
          <AppSlot><StoreIcon /></AppSlot>
          <AppSlot><MailIcon /></AppSlot>
          <AppSlot $w={64}><OfficeIcon /></AppSlot>
          <AppSlot $w={60} $ml={4} $bg="#fbe6e8" $pad="2px 4px 0 0"><TeamsIcon /><Badge $t={8} $r={3} $s={21} $c="#c4314b">8</Badge><RunDot $c="#d13438" $b={1} /></AppSlot>
          <AppSlot $w={78} $pad="4px 8px 0 0"><TodoIcon /><Badge $t={6} $r={16} $s={24} $c="#0a78d4">6</Badge></AppSlot>
          <AppSlot $w={50}><MagnifierIcon /></AppSlot>
          <AppSlot $w={80}><VsCode /><RunDot /></AppSlot>
          <AppSlot $w={56} $h={56} $ml={-2} $bg="#eef2fa" $pad="0 0 4px 0"><SnipIcon /><RunDot $c="#0a78d4" $w={24} $b={1} /></AppSlot>
        </Apps>
        <Tray>
          <TraySlot $w={48}><ChevronUp size={24} strokeWidth={1.5} /></TraySlot>
          <TraySlot $w={48}><CloudTray /></TraySlot>
          <TraySlot $w={48}><SyncTray /></TraySlot>
          <TraySlot $w={66}>FRA</TraySlot>
          <TraySlot $w={46}><Wifi size={25} strokeWidth={1.7} /></TraySlot>
          <TraySlot $w={28}><Volume2 size={25} strokeWidth={1.5} /></TraySlot>
          <TraySlot $w={44}><BatteryTray /></TraySlot>
          <Clock>08:08<br />2023-01-17</Clock>
          <NotifyDot>4</NotifyDot>
        </Tray>
      </Taskbar>
    </Screen>
  );
}
